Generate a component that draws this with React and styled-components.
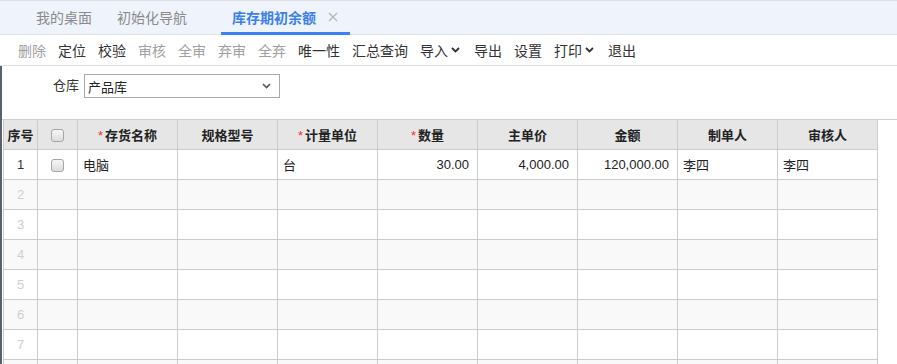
import styled, { createGlobalStyle } from "styled-components"

const GlobalStyle = createGlobalStyle`
    html, body {
        margin: 0;
        padding: 0;
        background: #fff;
    }
    body {
        font-family: "Liberation Sans", "Noto Sans CJK SC", sans-serif;
        color: #333;
    }
`

const Page = styled.div`
    width: 897px;
    height: 364px;
    overflow: hidden;
    background: #fff;
`

const TabBar = styled.div`
    display: flex;
    align-items: stretch;
    height: 33px;
    padding-left: 25px;
    background: #eff4fc;
    border-top: 1px solid #dcdfe4;
    border-bottom: 1px solid #dfe3ea;
`

const Tab = styled.div`
    position: relative;
    display: flex;
    align-items: center;
    gap: 12px;
    padding: 1px ${p => (p.$home ? "14px" : "12px")} 0 11px;
    font-size: 14px;
    color: ${p => (p.$active ? "#3d7fe8" : "#8a8a8a")};
    font-weight: ${p => (p.$active ? "bold" : "normal")};
    border-bottom: 3px solid ${p => (p.$active ? "#3b82f0" : "transparent")};
    margin-bottom: -1px;

    & + &::before {
        content: "";
        position: absolute;
        left: 0;
        top: 11px;
        height: 16px;
        width: 1px;
        background: #d9dde4;
    }
`

const CloseIcon = styled.svg`
    width: 10px;
    height: 10px;
    visibility: ${p => (p.$hidden ? "hidden" : "visible")};
`

const Toolbar = styled.div`
    display: flex;
    align-items: center;
    gap: 12px;
    height: 30px;
    padding-left: 18px;
    border-bottom: 1px solid #e0e0e0;
`

const ToolButton = styled.span`
    display: flex;
    align-items: center;
    font-size: 14px;
    color: ${p => (p.$disabled ? "#a0a0a0" : "#333")};
    white-space: nowrap;
`

const Caret = styled.svg`
    width: 9px;
    height: 6px;
    margin-left: 3px;
    margin-right: 2px;
`

const Body = styled.div`
    border-left: 2px solid #58616c;
`

const FilterRow = styled.div`
    display: flex;
    align-items: flex-start;
    gap: 5px;
    height: 53px;
    box-sizing: border-box;
    padding: 8px 0 0 51px;
`

const FilterLabel = styled.label`
    font-size: 13px;
    color: #333;
    line-height: 24px;
`

const SelectBox = styled.div`
    display: flex;
    align-items: center;
    justify-content: space-between;
    width: 196px;
    height: 24px;
    box-sizing: border-box;
    border: 1px solid #a9a9a9;
    padding: 0 6px 0 3px;
    font-size: 13px;
    color: #222;
`

const GridWrap = styled.div`
    border-top: 1px solid #cfcfcf;
    padding-left: 1px;
`

const Grid = styled.table`
    border-collapse: collapse;
    table-layout: fixed;
    width: 875px;
    font-size: 13px;
`

const HeadCell = styled.th`
    height: 29px;
    padding: 0;
    background: #e6e6e6;
    border: 1px solid #cccccc;
    border-top: none;
    font-weight: bold;
    color: #222;
    text-align: center;
`

const Star = styled.span`
    color: #ff2b2b;
    font-weight: normal;
    margin-right: 2px;
`

const Row = styled.tr`
    background: ${p => (p.$even ? "#f9f9f9" : "#fff")};
`

const Cell = styled.td`
    height: 29px;
    padding: ${p => (p.$align === "right" ? "0 8px 0 5px" : "0 5px")};
    border: 1px solid #cccccc;
    text-align: ${p => p.$align || "left"};
    color: #222;
    white-space: nowrap;
    overflow: hidden;
`

const IndexCell = styled(Cell)`
    text-align: center;
    padding: 0;
    color: ${p => (p.$filled ? "#333" : "#cfcfcf")};
`

const CheckCell = styled(Cell)`
    text-align: center;
    padding: 0;
`

const Checkbox = styled.span`
    display: inline-block;
    vertical-align: middle;
    width: 11px;
    height: 11px;
    border: 1px solid #a6a6a6;
    border-radius: 3px;
    background: linear-gradient(#f6f6f6, #dcdcdc);
`

const tabs = [
    { label: "我的桌面", home: true },
    { label: "初始化导航", closable: true, hidden: true },
    { label: "库存期初余额", closable: true, active: true },
]

const tools = [
    { label: "删除", disabled: true },
    { label: "定位" },
    { label: "校验" },
    { label: "审核", disabled: true },
    { label: "全审", disabled: true },
    { label: "弃审", disabled: true },
    { label: "全弃", disabled: true },
    { label: "唯一性" },
    { label: "汇总查询" },
    { label: "导入", menu: true },
    { label: "导出" },
    { label: "设置" },
    { label: "打印", menu: true },
    { label: "退出" },
]

const columns = [
    { title: "存货名称", required: true },
    { title: "规格型号" },
    { title: "计量单位", required: true },
    { title: "数量", required: true },
    { title: "主单价" },
    { title: "金额" },
    { title: "制单人" },
    { title: "审核人" },
]

const rows = [
    ["电脑", "", "台", "30.00", "4,000.00", "120,000.00", "李四", "李四"],
]

const aligns = ["left", "left", "left", "right", "right", "right", "left", "left"]

// rows that fit in the view; the last one is only its top edge
const visibleRows = 7

const App = () => {
    return (
        <Page>
            <GlobalStyle />
            <TabBar>
                {tabs.map(t => (
                    <Tab key={t.label} $active={t.active} $home={t.home}>
                        {t.label}
                        {t.closable && (
                            <CloseIcon viewBox="0 0 10 10" $hidden={t.hidden}>
                                <path d="M1 1L9 9M9 1L1 9" stroke="#b5b5b5" strokeWidth="1.3" />
                            </CloseIcon>
                        )}
                    </Tab>
                ))}
            </TabBar>

            <Toolbar>
                {tools.map(t => (
                    <ToolButton key={t.label} $disabled={t.disabled}>
                        {t.label}
                        {t.menu && (
                            <Caret viewBox="0 0 9 6">
                                <path d="M1 1L4.5 4.5L8 1" fill="none" stroke="#333" strokeWidth="1.8" />
                            </Caret>
                        )}
                    </ToolButton>
                ))}
            </Toolbar>

            <Body>
                <FilterRow>
                    <FilterLabel>仓库</FilterLabel>
                    <SelectBox>
                        产品库
                        <Caret viewBox="0 0 9 6">
                            <path d="M1 1L4.5 4.5L8 1" fill="none" stroke="#555" strokeWidth="1.6" />
                        </Caret>
                    </SelectBox>
                </FilterRow>

                <GridWrap>
                    <Grid>
                        <colgroup>
                            <col style={{ width: 34 }} />
                            <col style={{ width: 40 }} />
                            {columns.map(c => (
                                <col key={c.title} style={{ width: 100 }} />
                            ))}
                        </colgroup>
                        <thead>
                            <tr>
                                <HeadCell>序号</HeadCell>
                                <HeadCell>
                                    <Checkbox />
                                </HeadCell>
                                {columns.map(c => (
                                    <HeadCell key={c.title}>
                                        {c.required && <Star>*</Star>}
                                        {c.title}
                                    </HeadCell>
                                ))}
                            </tr>
                        </thead>
                        <tbody>
                            {Array.from({ length: visibleRows + 1 }).map((_, i) => {
                                const data = rows[i]
                                const shown = i < visibleRows
                                return (
                                    <Row key={i} $even={i % 2 === 1}>
                                        <IndexCell $filled={!!data}>{shown ? i + 1 : ""}</IndexCell>
                                        <CheckCell>{data && <Checkbox />}</CheckCell>
                                        {columns.map((c, j) => (
                                            <Cell key={c.title} $align={aligns[j]}>
                                                {data ? data[j] : ""}
                                            </Cell>
                                        ))}
                                    </Row>
                                )
                            })}
                        </tbody>
                    </Grid>
                </GridWrap>
            </Body>
        </Page>
    )
}

export default App
